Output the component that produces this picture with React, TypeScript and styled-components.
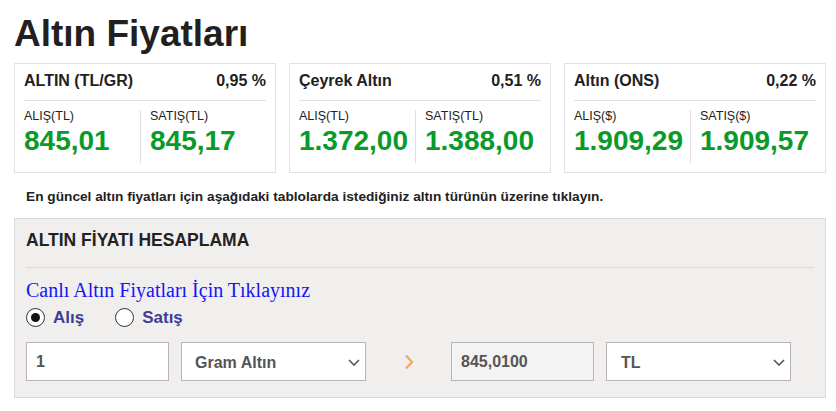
import React from "react";
import styled, { createGlobalStyle } from "styled-components";

const cards = [
    { name: "ALTIN (TL/GR)", change: "0,95 %", unit: "TL", buy: "845,01", sell: "845,17" },
    { name: "Çeyrek Altın", change: "0,51 %", unit: "TL", buy: "1.372,00", sell: "1.388,00" },
    { name: "Altın (ONS)", change: "0,22 %", unit: "$", buy: "1.909,29", sell: "1.909,57" },
];

const GlobalStyle = createGlobalStyle`
    body {
        margin: 0;
        background: #fff;
        font-family: "Liberation Sans", Arial, sans-serif;
        color: #222;
    }
`;

const Page = styled.div`
    width: 812px;
    padding: 14px 10px 0 14px;
`;

const Title = styled.h1`
    margin: 0;
    font-size: 37px;
    line-height: 40px;
    font-weight: 700;
    color: #231f20;
`;

const CardRow = styled.div`
    display: grid;
    grid-template-columns: repeat(3, 262px);
    gap: 13px;
    margin-top: 9px;
`;

const Card = styled.div`
    border: 1px solid #e2e2e2;
    padding: 0 9px 9px;
`;

const CardHead = styled.div`
    display: flex;
    justify-content: space-between;
    padding: 7px 0 9px;
    border-bottom: 1px solid #e0e0e0;
    font-size: 16px;
    line-height: 20px;
    font-weight: 700;
    color: #222;
`;

const PriceGrid = styled.div`
    display: grid;
    grid-template-columns: 116px 1fr;
    margin-top: 9px;
`;

const PriceCol = styled.div<{ $divided?: boolean }>`
    padding-bottom: 7px;
    padding-left: ${({ $divided }) => ($divided ? "9px" : "0")};
    border-left: ${({ $divided }) => ($divided ? "1px solid #e0e0e0" : "none")};
`;

const PriceLabel = styled.div`
    font-size: 12.5px;
    line-height: 13px;
    color: #222;
`;

const PriceValue = styled.div`
    margin-top: 3px;
    font-size: 28px;
    line-height: 30px;
    font-weight: 700;
    color: #0a9a2a;
    white-space: nowrap;
`;

const Note = styled.p`
    margin: 16px 0 0 12px;
    font-size: 13.7px;
    line-height: 16px;
    font-weight: 700;
    color: #222;
`;

const Panel = styled.section`
    margin-top: 13px;
    border: 1px solid #dedad9;
    background: #f1efee;
    padding: 11px 11px 16px;
`;

const PanelTitle = styled.h2`
    margin: 0;
    padding-bottom: 17px;
    border-bottom: 1px solid #dcdad9;
    font-size: 17.5px;
    line-height: 20px;
    font-weight: 700;
    color: #222;
`;

const LiveLink = styled.a`
    display: block;
    margin-top: 11px;
    font-family: "Liberation Serif", "Times New Roman", serif;
    font-size: 20px;
    line-height: 22px;
    color: #1515f5;
    text-decoration: none;
`;

const RadioRow = styled.div`
    display: flex;
    align-items: center;
    gap: 31px;
    margin-top: 7px;
`;

const RadioOption = styled.label`
    display: flex;
    align-items: center;
    gap: 8px;
    font-size: 17px;
    line-height: 19px;
    font-weight: 700;
    color: #3d3d92;
`;

const RadioDot = styled.span<{ $checked?: boolean }>`
    box-sizing: border-box;
    width: 19px;
    height: 19px;
    border-radius: 50%;
    border: 1.5px solid #333;
    background: #fff;
    display: grid;
    place-items: center;

    &::after {
        content: "";
        width: 9px;
        height: 9px;
        border-radius: 50%;
        background: #111;
        display: ${({ $checked }) => ($checked ? "block" : "none")};
    }
`;

const InputRow = styled.div`
    display: flex;
    align-items: center;
    margin-top: 15px;
`;

const Field = styled.input<{ $readonly?: boolean }>`
    box-sizing: border-box;
    width: 143px;
    height: 39px;
    border: 1px solid #bab3b3;
    border-radius: 0;
    padding: 0 9px;
    background: ${({ $readonly }) => ($readonly ? "#f4f3f3" : "#fff")};
    font-family: "Liberation Sans", Arial, sans-serif;
    font-size: 16px;
    font-weight: 700;
    color: #555;
    outline: none;
`;

const SelectWrap = styled.div`
    position: relative;
    width: 185px;
    height: 39px;
    margin-left: 12px;
`;

const Select = styled.select<{ $indent: number }>`
    box-sizing: border-box;
    width: 100%;
    height: 100%;
    appearance: none;
    border: 1px solid #bab3b3;
    border-radius: 0;
    padding: 2px 0 0 ${({ $indent }) => $indent}px;
    background: #fff;
    font-family: "Liberation Sans", Arial, sans-serif;
    font-size: 16px;
    font-weight: 700;
    color: #555;
    outline: none;
`;

const Chevron = styled.svg`
    position: absolute;
    right: 6px;
    top: 17px;
    pointer-events: none;
`;

const ArrowCell = styled.div`
    width: 85px;
    display: flex;
    justify-content: center;
`;

const Dropdown = ({ value, indent }: { value: string; indent: number }) => (
    <SelectWrap>
        <Select $indent={indent} defaultValue={value}>
            <option>{value}</option>
        </Select>
        <Chevron width="12" height="7" viewBox="0 0 12 7">
            <path d="M1 1l5 5 5-5" fill="none" stroke="#555" strokeWidth="1.6" />
        </Chevron>
    </SelectWrap>
);

const App = () => {
    return (
        <>
            <GlobalStyle />
            <Page>
                <Title>Altın Fiyatları</Title>
                <CardRow>
                    {cards.map((c) => (
                        <Card key={c.name}>
                            <CardHead>
                                <span>{c.name}</span>
                                <span>{c.change}</span>
                            </CardHead>
                            <PriceGrid>
                                <PriceCol>
                                    <PriceLabel>ALIŞ({c.unit})</PriceLabel>
                                    <PriceValue>{c.buy}</PriceValue>
                                </PriceCol>
                                <PriceCol $divided>
                                    <PriceLabel>SATIŞ({c.unit})</PriceLabel>
                                    <PriceValue>{c.sell}</PriceValue>
                                </PriceCol>
                            </PriceGrid>
                        </Card>
                    ))}
                </CardRow>
                <Note>En güncel altın fiyatları için aşağıdaki tablolarda istediğiniz altın türünün üzerine tıklayın.</Note>
                <Panel>
                    <PanelTitle>ALTIN FİYATI HESAPLAMA</PanelTitle>
                    <LiveLink href="#">Canlı Altın Fiyatları İçin Tıklayınız</LiveLink>
                    <RadioRow>
                        <RadioOption>
                            <RadioDot $checked />
                            Alış
                        </RadioOption>
                        <RadioOption>
                            <RadioDot />
                            Satış
                        </RadioOption>
                    </RadioRow>
                    <InputRow>
                        <Field defaultValue="1" />
                        <Dropdown value="Gram Altın" indent={13} />
                        <ArrowCell>
                            <svg width="10" height="16" viewBox="0 0 10 16">
                                <path d="M2 1.5l6 6.5-6 6.5" fill="none" stroke="#f2a65e" strokeWidth="2.2" />
                            </svg>
                        </ArrowCell>
                        <Field $readonly readOnly defaultValue="845,0100" />
                        <Dropdown value="TL" indent={14} />
                    </InputRow>
                </Panel>
            </Page>
        </>
    );
};

export default App;
